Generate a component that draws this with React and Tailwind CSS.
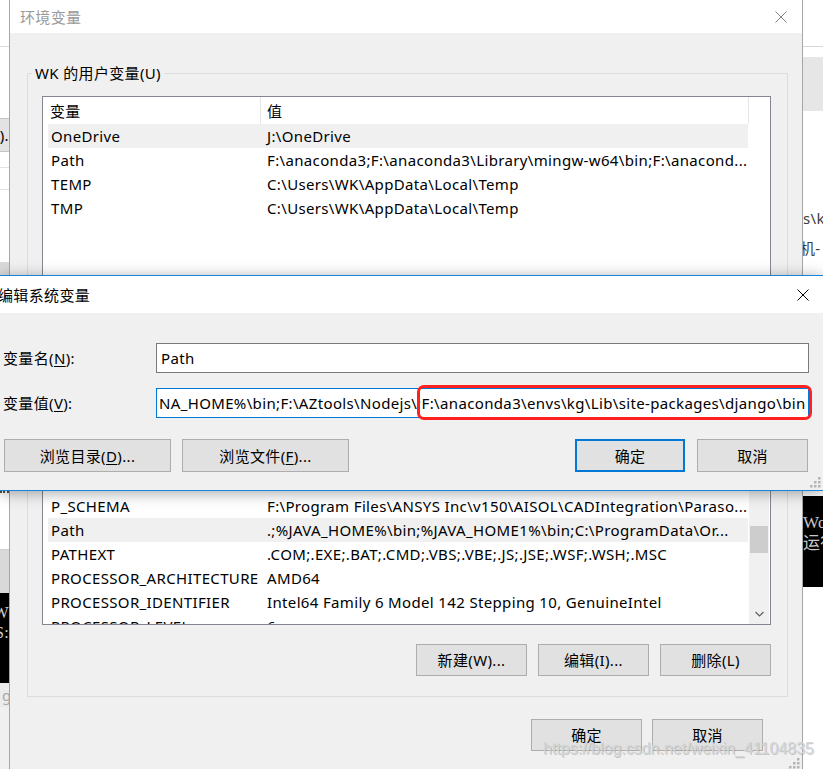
import React from 'react';

const FONT = "font-['Noto_Sans','Noto_Sans_CJK_SC',sans-serif]";

const userRows = [
  ['OneDrive', 'J:\\OneDrive'],
  ['Path', 'F:\\anaconda3;F:\\anaconda3\\Library\\mingw-w64\\bin;F:\\anacond...'],
  ['TEMP', 'C:\\Users\\WK\\AppData\\Local\\Temp'],
  ['TMP', 'C:\\Users\\WK\\AppData\\Local\\Temp'],
];

const systemRows = [
  ['JAVA_HOME1', 'C:\\Program Files\\Java\\jdk1.8.0_201'],
  ['NUMBER_OF_PROCESSORS', '8'],
  ['OS', 'Windows_NT'],
  ['P_SCHEMA', 'F:\\Program Files\\ANSYS Inc\\v150\\AISOL\\CADIntegration\\Paraso...'],
  ['Path', '.;%JAVA_HOME%\\bin;%JAVA_HOME1%\\bin;C:\\ProgramData\\Or...'],
  ['PATHEXT', '.COM;.EXE;.BAT;.CMD;.VBS;.VBE;.JS;.JSE;.WSF;.WSH;.MSC'],
  ['PROCESSOR_ARCHITECTURE', 'AMD64'],
  ['PROCESSOR_IDENTIFIER', 'Intel64 Family 6 Model 142 Stepping 10, GenuineIntel'],
  ['PROCESSOR_LEVEL', '6'],
];

function XIcon({ color }) {
  return (
    <svg width="12" height="12" viewBox="0 0 12 12" className="shrink-0">
      <path d="M0.5 0.5 L11.5 11.5 M11.5 0.5 L0.5 11.5" stroke={color} strokeWidth="1" fill="none" />
    </svg>
  );
}

function Chevron({ up }) {
  return (
    <svg width="9" height="6" viewBox="0 0 9 6">
      <path d={up ? 'M0.5 5 L4.5 1 L8.5 5' : 'M0.5 1 L4.5 5 L8.5 1'} stroke="#606060" strokeWidth="1.2" fill="none" />
    </svg>
  );
}

function Grip() {
  const dots = [[8, 0], [4, 4], [8, 4], [0, 8], [4, 8], [8, 8]];
  return (
    <svg width="11" height="11" viewBox="0 0 11 11">
      {dots.map(([x, y]) => (
        <rect key={`${x}-${y}`} x={x} y={y} width="2.5" height="2.5" fill="#b4b4b4" />
      ))}
    </svg>
  );
}

function Button({ children, className = '' }) {
  return (
    <div className={`h-[32px] w-[111px] bg-[#e1e1e1] border border-[#adadad] flex items-center justify-center ${className}`}>
      {children}
    </div>
  );
}

function Header() {
  return (
    <div className="h-[27px] flex shrink-0">
      <div className="w-[218px] pl-[7px] border-r border-[#e5e5e5] flex items-center">变量</div>
      <div className="w-[488px] pl-[6px] border-r border-[#e5e5e5] flex items-center">值</div>
    </div>
  );
}

function Row({ name, value, selected }) {
  return (
    <div className={`ml-[5px] w-[700px] h-[24px] shrink-0 flex items-center whitespace-nowrap ${selected ? 'bg-[#f0f0f0]' : 'bg-white'}`}>
      <div className="w-[213px] pl-[3px] overflow-hidden">{name}</div>
      <div className="w-[487px] pl-[6px] overflow-hidden">{value}</div>
    </div>
  );
}

function LeftStrip() {
  return (
    <div className="w-[9px] shrink-0 flex flex-col bg-white overflow-hidden">
      <div className="h-[47px] shrink-0 border-b border-[#dcdcdc]" />
      <div className="h-[71px] shrink-0" />
      <div className="h-[34px] shrink-0 bg-[#e3e3e3] border-y border-[#c4c4c4] flex items-center justify-end whitespace-nowrap">
        S).
      </div>
      <div className="h-[16px] shrink-0 border-b border-[#e2e2e2]" />
      <div className="h-[22px] shrink-0 border-b border-[#e2e2e2]" />
      <div className="h-[72px] shrink-0" />
      <div className="h-[13px] shrink-0 bg-[#dadada]" />
      <div className="h-[216px] shrink-0 bg-[#dadada]" />
      <div className="h-[3px] shrink-0 border-t-2 border-dotted border-[#5a4a3a]" />
      <div className="h-[56px] shrink-0 bg-white border-b border-[#cfcfcf]" />
      <div className="h-[43px] shrink-0 bg-[#d9d9d9]" />
      <div className="h-[90px] shrink-0 bg-black text-[#cfcfcf] flex flex-col items-end pt-[10px] font-['Liberation_Serif',serif] text-[16px] leading-[20px]">
        <span>W</span>
        <span>S:</span>
      </div>
      <div className="h-[24px] shrink-0 bg-[#ebebeb] text-[#a8a8a8] pl-[2px] flex items-center">g</div>
      <div className="flex-1 bg-[#f0f0f0]" />
    </div>
  );
}

function RightStrip() {
  return (
    <div className="w-[20px] shrink-0 flex flex-col bg-white overflow-hidden whitespace-nowrap">
      <div className="h-[47px] shrink-0 border-b border-[#d6d6d6]" />
      <div className="h-[10px] shrink-0" />
      <div className="h-[54px] shrink-0 bg-[#e6e6e6]" />
      <div className="h-[164px] shrink-0 flex flex-col text-[#3c3c3c]">
        <span className="mt-[97px]">s\k</span>
        <span className="mt-[10px] -ml-[3px]">机-</span>
      </div>
      <div className="h-[216px] shrink-0" />
      <div className="h-[5px] shrink-0" />
      <div className="h-[91px] shrink-0 bg-black text-[#c8c8c8] flex flex-col pt-[16px] font-['Liberation_Serif','Noto_Sans_CJK_SC',serif] text-[17px] leading-[21px]">
        <span>Wo</span>
        <span>运行</span>
      </div>
      <div className="flex-1" />
    </div>
  );
}

function EnvDialog() {
  return (
    <div className="relative w-[794px] shrink-0 h-full border-x border-[#a6a6a6] flex flex-col bg-[#f0f0f0]">
      <div className="h-[33px] shrink-0 bg-white flex items-center justify-between pl-[10px] pr-[15px]">
        <span className="text-[#9a9a9a]">环境变量</span>
        <XIcon color="#858585" />
      </div>

      <fieldset className="ml-[17px] mt-[30px] w-[761px] border border-[#dcdcdc] pb-[12px] shrink-0">
        <legend className="ml-[4px] px-[3px] leading-[20px]">WK 的用户变量(U)</legend>
        <div className="pl-[14px] pt-[13px]">
          <div className="w-[729px] h-[194px] border border-[#828790] bg-white flex overflow-hidden">
            <div className="w-[706px] flex flex-col">
              <Header />
              {userRows.map(([n, v], i) => (
                <Row key={n + i} name={n} value={v} selected={i === 0} />
              ))}
            </div>
            <div className="w-[21px]" />
          </div>
          <div className="w-[729px] mt-[10px] flex justify-end gap-[11px]">
            <Button>新建(N)...</Button>
            <Button>编辑(E)...</Button>
            <Button>删除(D)</Button>
          </div>
        </div>
      </fieldset>

      <fieldset className="ml-[17px] mt-[10px] w-[761px] border border-[#dcdcdc] pb-[20px] shrink-0">
        <legend className="ml-[4px] px-[3px] leading-[20px]">系统变量(S)</legend>
        <div className="pl-[14px] pt-[19px]">
          <div className="w-[729px] h-[231px] border border-[#828790] bg-white flex overflow-hidden">
            <div className="w-[706px] flex flex-col overflow-hidden">
              <Header />
              {systemRows.map(([n, v], i) => (
                <Row key={n + i} name={n} value={v} selected={i === 4} />
              ))}
            </div>
            <div className="w-[21px] flex">
              <div className="w-[20px] h-full bg-[#f0f0f0] flex flex-col items-center">
                <div className="h-[20px] shrink-0 flex items-center justify-center">
                  <Chevron up />
                </div>
                <div className="mt-[111px] w-[18px] h-[27px] shrink-0 bg-[#cdcdcd]" />
                <div className="flex-1" />
                <div className="h-[20px] shrink-0 flex items-center justify-center">
                  <Chevron />
                </div>
              </div>
            </div>
          </div>
          <div className="w-[729px] mt-[19px] flex justify-end gap-[11px]">
            <Button>新建(W)...</Button>
            <Button>编辑(I)...</Button>
            <Button>删除(L)</Button>
          </div>
        </div>
      </fieldset>

      <div className="mt-[22px] flex justify-end gap-[10px] pr-[39px]">
        <Button>确定</Button>
        <Button>取消</Button>
      </div>

      <div className="absolute right-[2px] bottom-[0px]">
        <Grip />
      </div>
    </div>
  );
}

function EditDialog() {
  return (
    <div className="absolute left-0 top-[275px] w-[823px] h-[216px] border-y border-[#1883d7] bg-[#f0f0f0] shadow-[0_2px_14px_rgba(0,0,0,0.35)] flex flex-col">
      <div className="h-[37px] shrink-0 bg-white flex items-center justify-between pr-[14px]">
        <span className="-ml-[2px]">编辑系统变量</span>
        <XIcon color="#000000" />
      </div>
      <div className="flex-1 flex flex-col">
        <div className="mt-[30px] flex items-center">
          <div className="w-[156px] pl-[3px]">
            变量名(<span className="underline underline-offset-2">N</span>):
          </div>
          <div className="w-[653px] h-[30px] border border-[#7a7a7a] bg-white flex items-center pl-[4px]">Path</div>
        </div>
        <div className="mt-[15px] flex items-center">
          <div className="w-[156px] pl-[3px]">
            变量值(<span className="underline underline-offset-2">V</span>):
          </div>
          <div className="w-[653px] h-[30px] border border-[#0078d7] bg-white flex items-center pl-[2px] overflow-hidden whitespace-nowrap">
            NA_HOME%\bin;F:\AZtools\Nodejs\;F:\anaconda3\envs\kg\Lib\site-packages\django\bin
          </div>
        </div>
        <div className="mt-[21px] flex">
          <Button className="ml-[4px] w-[167px] h-[33px]">
            浏览目录(<span className="underline underline-offset-2">D</span>)...
          </Button>
          <Button className="ml-[11px] w-[167px] h-[33px]">
            浏览文件(<span className="underline underline-offset-2">F</span>)...
          </Button>
          <div className="ml-[226px] w-[110px] h-[33px] bg-[#e1e1e1] border-2 border-[#0078d7] flex items-center justify-center">
            确定
          </div>
          <Button className="ml-[12px] h-[33px]">取消</Button>
        </div>
      </div>

      {/* red annotation box */}
      <div className="absolute left-[417px] top-[109px] w-[395px] h-[35px] border-[3px] border-[#ff2020] rounded-[7px]" />

      <div className="absolute right-[2px] bottom-[2px]">
        <Grip />
      </div>
    </div>
  );
}

export default function App() {
  return (
    <div className={`relative w-[823px] h-[769px] overflow-hidden bg-white flex text-[15px] leading-[20px] tracking-[0.35px] text-black ${FONT}`}>
      <LeftStrip />
      <EnvDialog />
      <RightStrip />
      <EditDialog />
      <div className="absolute left-[543px] top-[739px] whitespace-nowrap font-['Liberation_Sans',sans-serif] text-[16px] leading-[20px] tracking-normal text-[#d4d4d4] [text-shadow:1px_1px_0_rgba(120,120,120,0.35)]">
        https://blog.csdn.net/weixin_41104835
      </div>
    </div>
  );
}
